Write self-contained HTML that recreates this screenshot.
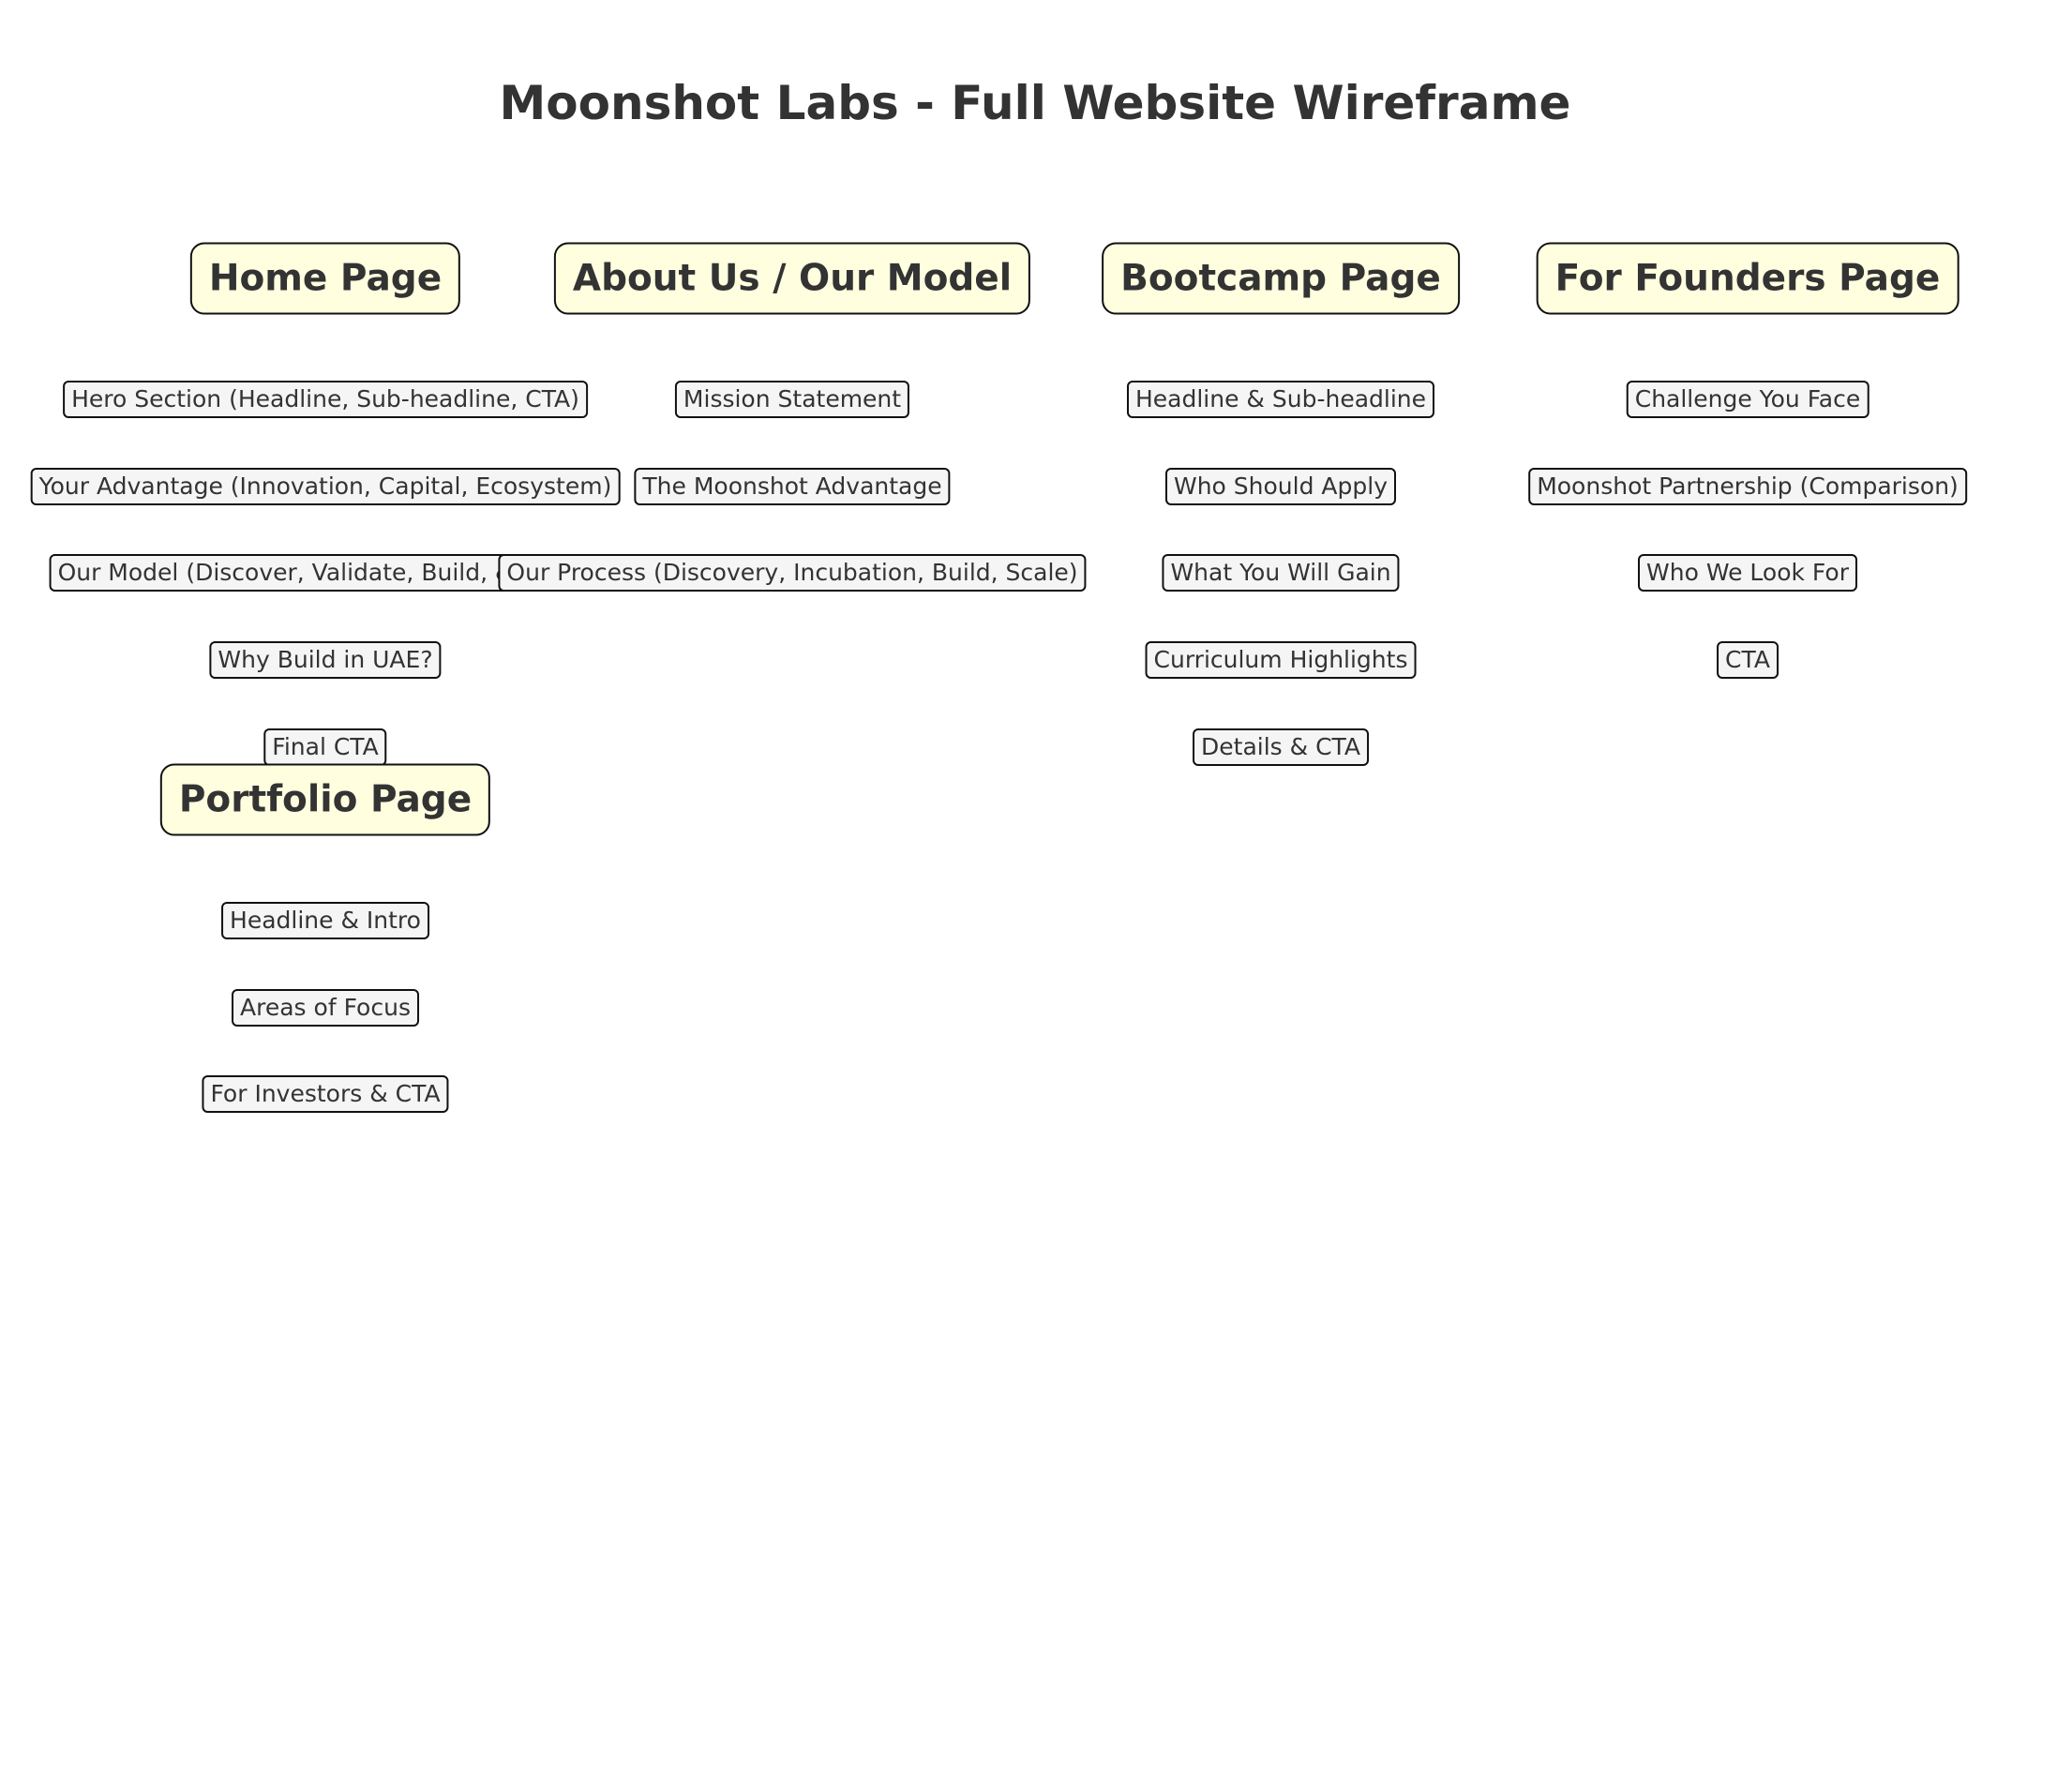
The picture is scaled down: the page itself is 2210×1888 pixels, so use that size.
<!DOCTYPE html>
<html><head><meta charset="utf-8"><style>
html,body{margin:0;padding:0;background:#fff;}
body{width:2210px;height:1888px;position:relative;overflow:hidden;font-family:"DejaVu Sans","Liberation Sans",sans-serif;color:#333;}
.t{position:absolute;left:1104px;top:110px;transform:translate(-50%,-50%);font-weight:bold;font-size:50px;white-space:nowrap;}
.h{position:absolute;transform:translate(-50%,-50%);background:#ffffe0;border:2.5px solid #111;border-radius:15px;font-weight:bold;font-size:39px;line-height:45px;padding:14px 18px;white-space:nowrap;}
.s{position:absolute;transform:translate(-50%,-50%);background:#f5f5f5;border:2.5px solid #111;border-radius:6px;font-size:25px;line-height:28px;padding:4px 7px;white-space:nowrap;}
</style></head><body>
<div class="t">Moonshot Labs - Full Website Wireframe</div>

<div class="h" style="left:347px;top:297px">Home Page</div>
<div class="s" style="left:347px;top:426px">Hero Section (Headline, Sub-headline, CTA)</div>
<div class="s" style="left:347px;top:519px">Your Advantage (Innovation, Capital, Ecosystem)</div>
<div class="s" style="left:347px;top:611px">Our Model (Discover, Validate, Build, &amp; Scale)</div>
<div class="s" style="left:347px;top:704px">Why Build in UAE?</div>
<div class="s" style="left:347px;top:797px">Final CTA</div>

<div class="h" style="left:845px;top:297px">About Us / Our Model</div>
<div class="s" style="left:845px;top:426px">Mission Statement</div>
<div class="s" style="left:845px;top:519px">The Moonshot Advantage</div>
<div class="s" style="left:845px;top:611px">Our Process (Discovery, Incubation, Build, Scale)</div>

<div class="h" style="left:1366px;top:297px">Bootcamp Page</div>
<div class="s" style="left:1366px;top:426px">Headline &amp; Sub-headline</div>
<div class="s" style="left:1366px;top:519px">Who Should Apply</div>
<div class="s" style="left:1366px;top:611px">What You Will Gain</div>
<div class="s" style="left:1366px;top:704px">Curriculum Highlights</div>
<div class="s" style="left:1366px;top:797px">Details &amp; CTA</div>

<div class="h" style="left:1864px;top:297px">For Founders Page</div>
<div class="s" style="left:1864px;top:426px">Challenge You Face</div>
<div class="s" style="left:1864px;top:519px">Moonshot Partnership (Comparison)</div>
<div class="s" style="left:1864px;top:611px">Who We Look For</div>
<div class="s" style="left:1864px;top:704px">CTA</div>

<div class="h" style="left:347px;top:853px">Portfolio Page</div>
<div class="s" style="left:347px;top:982px">Headline &amp; Intro</div>
<div class="s" style="left:347px;top:1075px">Areas of Focus</div>
<div class="s" style="left:347px;top:1167px">For Investors &amp; CTA</div>
</body></html>
